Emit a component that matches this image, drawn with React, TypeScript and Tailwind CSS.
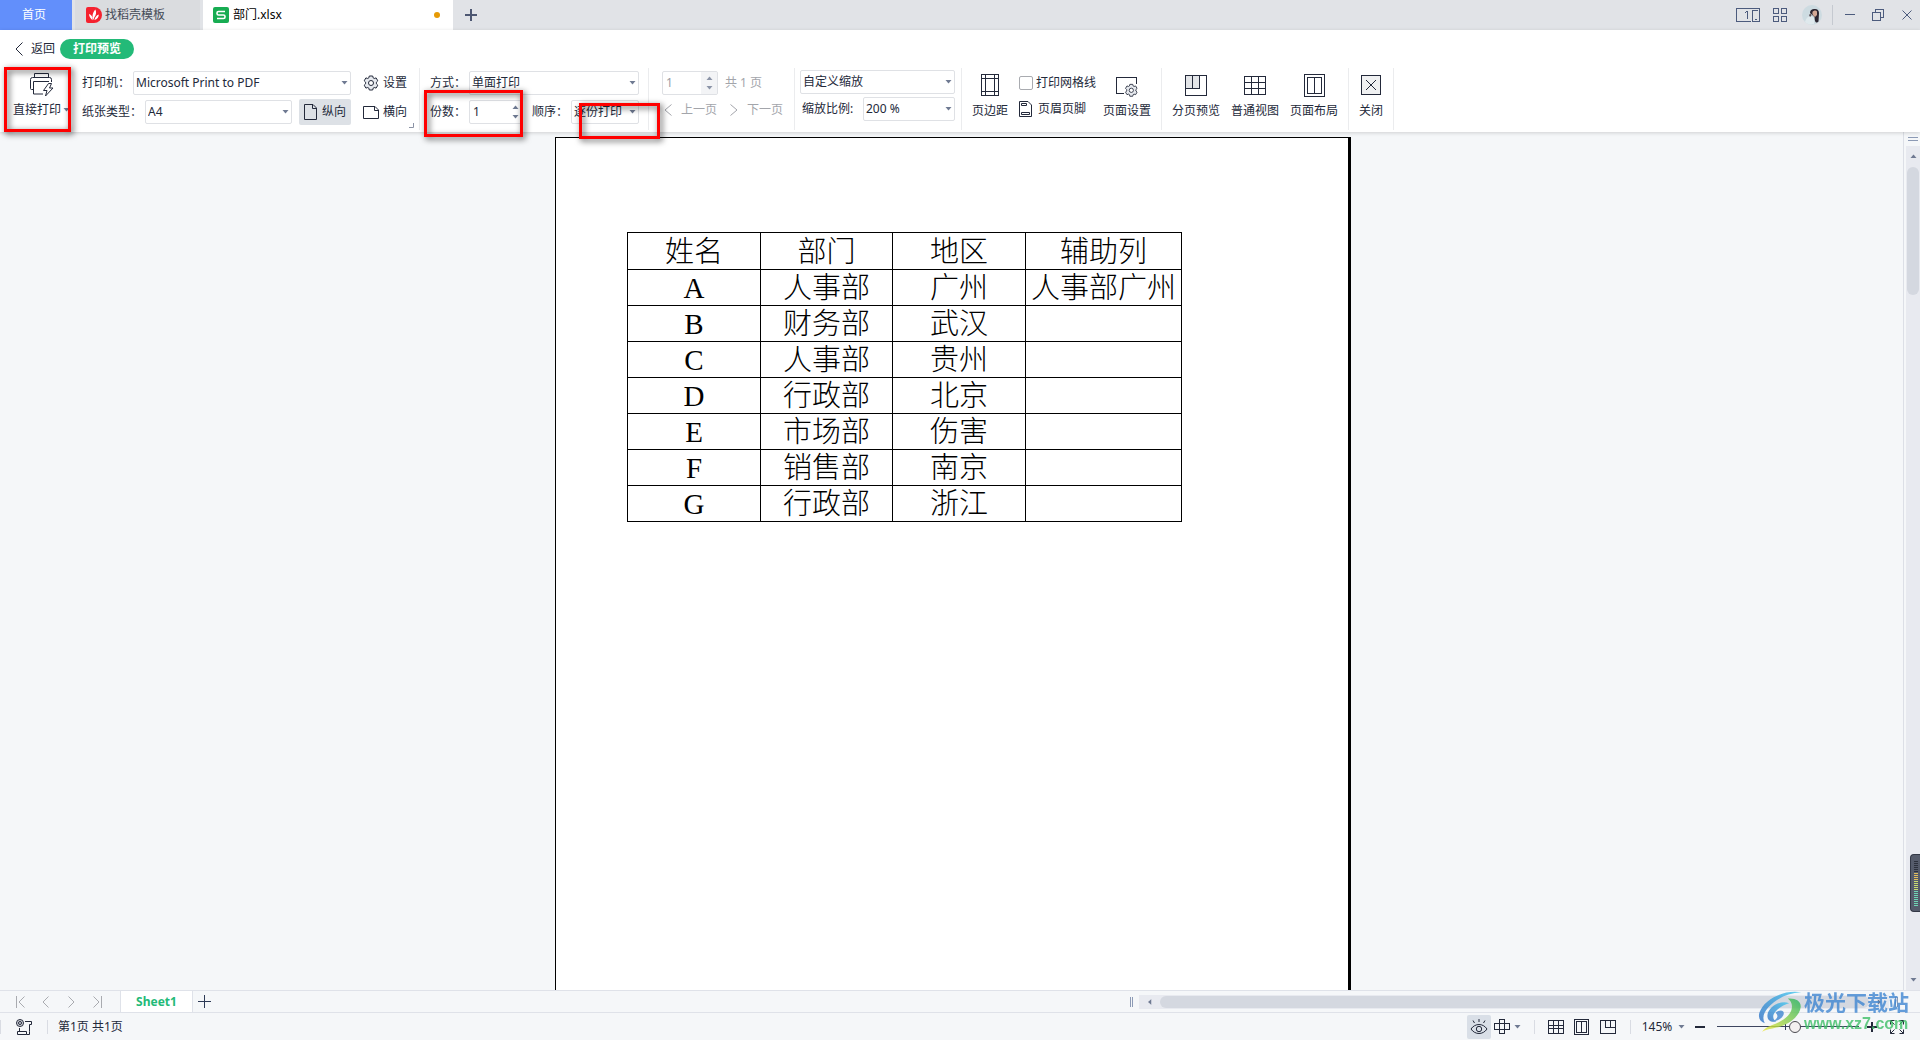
import React from 'react'
import clsx from 'clsx'

const HEADERS = ['姓名', '部门', '地区', '辅助列']

const ROWS = [
    ['A', '人事部', '广州', '人事部广州'],
    ['B', '财务部', '武汉', ''],
    ['C', '人事部', '贵州', ''],
    ['D', '行政部', '北京', ''],
    ['E', '市场部', '伤害', ''],
    ['F', '销售部', '南京', ''],
    ['G', '行政部', '浙江', ''],
]

const CELL = 'border border-black px-0 pt-[2px] pb-0 text-center font-light'

type IconProps = {
    w: number
    h: number
    className?: string
    children: React.ReactNode
}

const Icon: React.FC<IconProps> = ({ w, h, className, children }) => (
    <svg
        width={w}
        height={h}
        viewBox={`0 0 ${w} ${h}`}
        fill="none"
        stroke="currentColor"
        className={clsx('shrink-0', className)}
        aria-hidden="true"
    >
        {children}
    </svg>
)

const Caret = ({ className }: { className?: string }) => (
    <Icon w={7} h={4} className={clsx('text-[#6f7a92]', className)}>
        <path d="M0.5 0h6L3.5 3.5z" fill="currentColor" stroke="none" />
    </Icon>
)

const GearShape = () => (
    <>
        <path d="M6.3 1h3.4l.5 1.9 1 .6 1.9-.6 1.7 2.9-1.4 1.4v1.6l1.4 1.4-1.7 2.9-1.9-.6-1 .6-.5 1.9H6.3l-.5-1.9-1-.6-1.9.6-1.7-2.9 1.4-1.4V7.2L1.2 5.8l1.7-2.9 1.9.6 1-.6z" fill="#e6e9ee" />
        <circle cx="8" cy="8" r="2.5" fill="#fff" />
    </>
)

const Chevron = ({ dir, w = 8, h = 14, className }: { dir: 'left' | 'right'; w?: number; h?: number; className?: string }) => (
    <Icon w={w} h={h} className={className}>
        {dir === 'left'
            ? <path d={`M${w - 0.5} 0.5L1 ${h / 2}L${w - 0.5} ${h - 0.5}`} />
            : <path d={`M0.5 0.5L${w - 1} ${h / 2}L0.5 ${h - 0.5}`} />}
    </Icon>
)

const GridIcon = ({ w, h }: { w: number; h: number }) => (
    <Icon w={w} h={h}>
        <path
            shapeRendering="crispEdges"
            d={`M0.5 0.5h${w - 1}v${h - 1}h${1 - w}zM${Math.round(w / 3) + 0.5} 0v${h}M${Math.round((w * 2) / 3) - 0.5} 0v${h}M0 ${Math.round(h / 3) + 0.5}h${w}M0 ${Math.round((h * 2) / 3) - 0.5}h${w}`}
        />
    </Icon>
)

const BookIcon = ({ w, h, inset }: { w: number; h: number; inset: number }) => (
    <Icon w={w} h={h}>
        <path
            shapeRendering="crispEdges"
            d={`M0.5 0.5h${w - 1}v${h - 1}h${1 - w}zM${inset + 0.5} ${inset + 0.5}h${w - inset * 2 - 1}v${h - inset * 2 - 1}h${inset * 2 + 1 - w}zM${Math.floor(w / 2) + 0.5} ${inset}v${h - inset * 2}`}
        />
    </Icon>
)

type SelectProps = {
    id: string
    value: string
    className: string
    label?: string
}

const Select: React.FC<SelectProps> = ({ id, value, className, label }) => (
    <div className={clsx('grid h-6 shrink-0 items-center', className)}>
        <select
            id={id}
            aria-label={label}
            className="col-start-1 row-start-1 h-6 w-full appearance-none rounded-xs border border-[#dfe1e5] bg-white pl-0.5 text-[12px] outline-none"
        >
            <option>{value}</option>
        </select>
        <Caret className="pointer-events-none col-start-1 row-start-1 mr-[3px] justify-self-end" />
    </div>
)

type SpinnerProps = {
    id: string
    className: string
    label?: string
    disabled?: boolean
}

const Spinner: React.FC<SpinnerProps> = ({ id, className, label, disabled }) => (
    <div className={clsx('flex h-6 shrink-0 rounded-xs border border-[#dfe1e5] bg-white', disabled && 'text-[#9a9da5]', className)}>
        <input id={id} aria-label={label} defaultValue="1" disabled={disabled} className="w-full min-w-0 pl-[3px] text-[12px] outline-none" />
        <div className={clsx('flex shrink-0 flex-col items-center justify-between py-1', disabled ? 'w-4 bg-[#f1f2f4] opacity-80' : 'w-3')}>
            <Caret className="rotate-180" />
            <Caret />
        </div>
    </div>
)

const Group = ({ className, children }: { className?: string; children: React.ReactNode }) => (
    <div className={clsx('flex h-[62px] shrink-0 border-r border-[#ebecee]', className)}>{children}</div>
)

const BigButton = ({ label, className, children }: { label: string; className?: string; children: React.ReactNode }) => (
    <button className={clsx('flex h-[52px] shrink-0 flex-col items-center', className)}>
        <span className="flex h-7 items-center">{children}</span>
        <span className="leading-6">{label}</span>
    </button>
)

const Highlight = ({ className }: { className: string }) => (
    <div className={clsx('pointer-events-none absolute z-20 border-3 border-[#f00] drop-shadow-[2px_2px_3px_rgba(0,0,0,0.7)]', className)} />
)

const TitleBar = () => (
    <header className="flex h-[30px] shrink-0 bg-[#e1e3e7]">
        <button className="w-[72px] bg-[#628ffb] pr-1 text-white">首页</button>
        <button className="ml-[3px] flex w-[125px] items-center gap-[3px] bg-[#dadcdf] pl-[11px] text-[#454b57]">
            <Icon w={16} h={16}>
                <path d="M2 0h6a8 8 0 0 1 0 16H2a2 2 0 0 1-2-2V2a2 2 0 0 1 2-2z" fill="#f5222f" stroke="none" />
                <path d="M6.6 13.2C4.6 11.8 3.2 9.8 3 7c1.7.6 2.8 1.7 3.4 3.200zM7.4 13C5.8 9 6.8 5.2 9.4 2.600c1.2 2.4.9 5.4-1.2 8z" fill="#fff" stroke="none" />
                <path d="M8.4 13c.4-2.6 2-4.8 4.400-5.600-.1 2.800-1.600 4.900-4.400 5.600z" fill="#fff" stroke="none" />
            </Icon>
            <span>找稻壳模板</span>
        </button>
        <button className="ml-[3px] flex w-[250px] items-center gap-1 bg-white pr-[13px] pl-[10px] text-black">
            <Icon w={16} h={16}>
                <rect width="16" height="16" rx="2" fill="#17ac52" stroke="none" />
                <path d="M12 4.5H5.5A1.5 1.5 0 0 0 4 6v.5A1.5 1.5 0 0 0 5.5 8h5A1.5 1.5 0 0 1 12 9.5v.5a1.5 1.5 0 0 1-1.5 1.5H4" stroke="#fff" strokeWidth="1.6" />
            </Icon>
            <span>部门.xlsx</span>
            <span className="ml-auto size-1.5 rounded-full bg-[#e69a05]" />
        </button>
        <button className="flex w-9 items-center justify-center text-[#4d5772]" aria-label="新建">
            <Icon w={12} h={12}><path d="M6 0v12M0 6h12" strokeWidth="2" shapeRendering="crispEdges" /></Icon>
        </button>
        <div className="ml-auto flex items-center pr-2 text-[#4c5b7d]">
            <button aria-label="窗口排列">
                <Icon w={24} h={14}>
                    <path d="M15 13.5H0.5V0.5h23v13h-7v-11h5" shapeRendering="crispEdges" />
                    <path d="M9 5l2-1.5V11M19 11.5h2" shapeRendering="crispEdges" />
                </Icon>
            </button>
            <button className="ml-[13px]" aria-label="应用">
                <Icon w={14} h={14}>
                    <path d="M0.5 0.5h5v5h-5zM8.5 0.5h5v5h-5zM0.5 8.5h5v5h-5zM8.5 8.5h5v5h-5z" shapeRendering="crispEdges" />
                </Icon>
            </button>
            <button className="ml-[15px]" aria-label="账户">
                <Icon w={20} h={20}>
                    <circle cx="10" cy="10" r="10" fill="#cddbe1" stroke="none" />
                    <path d="M3 17c1-4 3-6 6-6l3 2v6c-4 1-7 0-9-2z" fill="#dfe9ed" stroke="none" />
                    <path d="M8 8c0-3 2-4 4-4 3-.5 5 1 5 4l-.5 8.5c-1.5 2-3.5 1-3.7-1.5L12.5 12z" fill="#2b2530" stroke="none" />
                    <path d="M10.5 7c1-1.5 3.5-2 4.5-.5v3.5l-2 2c-2-1-3-3-2.5-5z" fill="#d3a895" stroke="none" />
                    <path d="M7 10l1.500-1.500 1 2L8 12z" fill="#5a4f55" stroke="none" />
                </Icon>
            </button>
            <span className="ml-[10px] h-5 w-px bg-[#c5c9d0]" />
            <button className="ml-3" aria-label="最小化">
                <Icon w={10} h={12}><path d="M0 5.5h10" shapeRendering="crispEdges" /></Icon>
            </button>
            <button className="ml-[17px]" aria-label="还原">
                <Icon w={12} h={12}>
                    <path d="M0.5 3.5h8v8h-8zM3.5 3V0.5h8v8H9" shapeRendering="crispEdges" />
                </Icon>
            </button>
            <button className="ml-[18px]" aria-label="关闭窗口">
                <Icon w={10} h={10}><path d="M0.5 0.5l9 9M9.5 0.5l-9 9" /></Icon>
            </button>
        </div>
    </header>
)

const Toolbar = () => (
    <div className="relative z-10 shrink-0 bg-white shadow-[0_1px_4px_rgba(0,0,0,0.16)]">
        <div className="flex h-[38px] items-center pl-[15px]">
            <button className="flex items-center gap-2">
                <Chevron dir="left" />
                返回
            </button>
            <span className="ml-[5px] flex h-5 w-[74px] items-center justify-center rounded-full bg-[#23ba78] font-bold text-white">打印预览</span>
        </div>
        <div className="flex h-16">
            <div className="relative w-[82px] shrink-0 pl-[13px]">
                <button className="flex flex-col">
                    <span className="flex h-[30px] w-12 items-center justify-end pt-1 pr-[7px]">
                        <Icon w={24} h={24}>
                            <path d="M4.5 4V0.5h14V4M3 16.5H1.5a1 1 0 0 1-1-1v-9a2 2 0 0 1 2-2h17a2 2 0 0 1 2 2V9M19 8.5H3.5v12.5H13" />
                            <path d="M18.5 10.5l-5 7h3.5l-1.5 5.5 7.5-8h-3.5l2-4.5z" />
                        </Icon>
                    </span>
                    <span className="flex items-center gap-[2px] leading-6">直接打印<Caret /></span>
                </button>
                <Highlight className="-top-px left-1 h-[65px] w-[67px]" />
            </div>

            <Group className="relative w-[338px] flex-col gap-1 pt-[3px]">
                <div className="flex items-center">
                    <label htmlFor="printer" className="w-[51px]">打印机：</label>
                    <Select id="printer" value="Microsoft Print to PDF" className="w-[218px]" />
                    <button className="ml-3 flex items-center gap-1"><Icon w={16} h={16}><GearShape /></Icon>设置</button>
                </div>
                <div className="flex items-center">
                    <label htmlFor="paper" className="w-[63px]">纸张类型：</label>
                    <Select id="paper" value="A4" className="w-[147px]" />
                    <button className="ml-[7px] flex h-[26px] w-[52px] items-center gap-[5px] rounded-xs bg-[#dde1e6] pl-[5px]">
                        <Icon w={13} h={16}><path d="M0.5 0.5h8.5l3.5 3.5v11.5h-12zM8.5 0.5v4h4" /></Icon>
                        纵向
                    </button>
                    <button className="ml-3 flex items-center gap-1">
                        <Icon w={16} h={13}><path d="M0.5 0.5h11.5l3.5 3.5v8.5h-15zM11.5 0.5v4h4" /></Icon>
                        横向
                    </button>
                </div>
                <Icon w={5} h={5} className="absolute right-[5px] bottom-0.5 text-[#8b93a5]"><path d="M0 4.5h4.5V0" /></Icon>
            </Group>

            <Group className="relative w-[229px] flex-col gap-[5px] pt-[3px] pl-[10px]">
                <div className="flex items-center">
                    <label htmlFor="sides" className="w-[39px]">方式：</label>
                    <Select id="sides" value="单面打印" className="w-[170px]" />
                </div>
                <div className="flex items-center">
                    <label htmlFor="copies" className="w-[39px]">份数：</label>
                    <Spinner id="copies" className="w-[53px]" />
                    <label htmlFor="order" className="ml-[10px] w-[39px]">顺序：</label>
                    <Select id="order" value="逐份打印" className="w-[68px]" />
                </div>
                <Highlight className="top-[22px] left-1 h-[47px] w-[99px]" />
                <Highlight className="top-[35px] left-[159px] h-9 w-[81px]" />
            </Group>

            <Group className="w-[146px] flex-col gap-[2px] pt-[3px] pl-[13px] text-[#a3a5ab]">
                <div className="flex items-center gap-[7px]">
                    <Spinner id="page" label="页码" disabled className="w-[56px]" />
                    共 1 页
                </div>
                <div className="flex h-[26px] items-center gap-[13px] pl-[2px]">
                    <button disabled className="flex items-center gap-[9px]"><Chevron dir="left" h={12} />上一页</button>
                    <button disabled className="flex items-center gap-[9px]"><Chevron dir="right" h={12} />下一页</button>
                </div>
            </Group>

            <Group className="w-[167px] flex-col gap-[3px] pt-[2px] pl-[5px]">
                <Select id="scaling" label="缩放" value="自定义缩放" className="w-[155px]" />
                <div className="flex items-center">
                    <label htmlFor="ratio" className="w-[63px] pl-[2px]">缩放比例:</label>
                    <Select id="ratio" value="200 %" className="w-[92px]" />
                </div>
            </Group>

            <Group className="w-[200px] pt-[3px] pl-[10px]">
                <BigButton label="页边距" className="w-9">
                    <Icon w={18} h={22}><path d="M0.5 0.5h17v21h-17zM4.5 0v22M13.5 0v22M0 4.5h18M0 17.5h18" shapeRendering="crispEdges" /></Icon>
                </BigButton>
                <div className="ml-[11px] flex flex-col">
                    <label className="flex h-6 items-center gap-[3px]">
                        <input type="checkbox" className="size-[14px] appearance-none rounded-xs border border-[#a9abb0] bg-white" />
                        打印网格线
                    </label>
                    <button className="flex h-7 items-center gap-1.5">
                        <Icon w={13} h={16}>
                            <path d="M0.5 0.5h8.5l3.5 3.5v11.5h-12zM2.5 2.5h5v2h-5zM2.5 11.5h8v2h-8z" />
                        </Icon>
                        页眉页脚
                    </button>
                </div>
                <BigButton label="页面设置" className="ml-[7px] w-12">
                    <Icon w={24} h={22} className="mt-1">
                        <path d="M9 17.5H1.5V1.5h20V8" shapeRendering="crispEdges" />
                        <g transform="translate(9.5 7.5) scale(0.85)"><GearShape /></g>
                    </Icon>
                </BigButton>
            </Group>

            <Group className="w-[187px] gap-[11px] pt-[3px] pl-[10px]">
                <BigButton label="分页预览" className="w-12">
                    <Icon w={22} h={21}>
                        <path d="M1 1h14v12H1z" fill="#e3e5e8" stroke="none" />
                        <path d="M0.5 0.5h21v20h-21zM0 13.5h14.5V0M7.5 0v13" shapeRendering="crispEdges" />
                    </Icon>
                </BigButton>
                <BigButton label="普通视图" className="w-12"><GridIcon w={22} h={19} /></BigButton>
                <BigButton label="页面布局" className="w-12"><BookIcon w={21} h={23} inset={3} /></BigButton>
            </Group>

            <Group className="w-[45px] pt-[3px] pl-[10px]">
                <BigButton label="关闭" className="w-6">
                    <Icon w={20} h={20}>
                        <path d="M0.5 0.5h19v19h-19z" fill="#f0f1f2" shapeRendering="crispEdges" />
                        <path d="M5 5l10 10M15 5L5 15" />
                    </Icon>
                </BigButton>
            </Group>
        </div>
    </div>
)

const Preview = () => (
    <main className="flex min-h-0 flex-1">
        <div className="flex flex-1 justify-center overflow-hidden pt-[5px] pl-[3px]">
            <div className="w-[796px] border-t border-r-3 border-l border-black bg-white pt-[94px] pl-[71px]">
                <table className="w-[554px] table-fixed border-collapse font-['Liberation_Serif','Noto_Sans_CJK_SC',serif] text-[29px] leading-[33px] text-black">
                    <colgroup>
                        <col className="w-[133px]" />
                        <col className="w-[132px]" />
                        <col className="w-[133px]" />
                        <col className="w-[156px]" />
                    </colgroup>
                    <thead>
                        <tr className="h-[37px]">
                            {HEADERS.map((h) => <th key={h} className={CELL}>{h}</th>)}
                        </tr>
                    </thead>
                    <tbody>
                        {ROWS.map((row) => (
                            <tr key={row[0]} className="h-9">
                                {row.map((cell, i) => <td key={i} className={CELL}>{cell}</td>)}
                            </tr>
                        ))}
                    </tbody>
                </table>
            </div>
        </div>
        <div className="relative flex w-[17px] shrink-0 flex-col border-l border-[#dcdfe6] pl-0.5">
            <div className="flex h-[14px] items-center justify-center text-[#8c9ab5]">
                <Icon w={10} h={4}><path d="M0 0.5h10M0 3.5h10" shapeRendering="crispEdges" /></Icon>
            </div>
            <div className="flex flex-1 flex-col items-center bg-[#e8eaf0]">
                <div className="flex h-[21px] items-center pb-0.5"><Caret className="rotate-180" /></div>
                <div className="h-32 w-3 rounded-full bg-[#d4d8e0]" />
                <div className="mt-auto flex h-5 items-center"><Caret /></div>
            </div>
            {/* floating level meter */}
            <div className="absolute right-0 bottom-[78px] flex h-[58px] w-[10px] flex-col items-center gap-px rounded-l-sm border border-r-0 border-[#333846] bg-[#555b6b] pt-1.5">
                {Array.from({ length: 23 }, (_, i) => (
                    <span
                        key={i}
                        className={clsx('h-px w-1 shrink-0', i < 6 ? 'bg-[#2c303c]' : i < 10 ? 'bg-[#e2bf5c]' : i < 15 ? 'bg-[#c9dc72]' : 'bg-[#6fd6b4]')}
                    />
                ))}
            </div>
        </div>
    </main>
)

const SheetBar = () => (
    <div className="flex h-[23px] shrink-0 border-y border-[#dfe2e9]">
        <div className="flex w-[120px] items-center pl-4 text-[#a9abb0]">
            <button aria-label="首个工作表"><Icon w={9} h={12}><path d="M0.5 0v12M8.5 0.5L3 6l5.5 5.5" /></Icon></button>
            <button className="ml-[17px]" aria-label="上一个工作表"><Chevron dir="left" w={7} h={12} /></button>
            <button className="ml-[19px]" aria-label="下一个工作表"><Chevron dir="right" w={7} h={12} /></button>
            <button className="ml-[18px]" aria-label="末个工作表"><Icon w={9} h={12}><path d="M8.5 0v12M0.5 0.5L6 6L0.5 11.5" /></Icon></button>
        </div>
        <button className="w-[73px] border-x border-[#dfe2e9] bg-white font-bold text-[#23ba78]">Sheet1</button>
        <button className="pl-[5px] text-[#2d3a56]" aria-label="新建工作表">
            <Icon w={13} h={13}><path d="M6.5 0v13M0 6.5h13" shapeRendering="crispEdges" /></Icon>
        </button>
        <div className="ml-auto flex w-[790px] items-center text-[#8c9ab5]">
            <Icon w={3} h={10}><path d="M0.5 0v10M2.5 0v10" shapeRendering="crispEdges" /></Icon>
            <div className="ml-1.5 flex h-[14px] flex-1 items-center bg-[#e8eaf0]">
                <span className="flex w-[21px] justify-center"><Caret className="rotate-90" /></span>
                <div className="h-3 flex-1 rounded-full bg-[#d4d8e0]" />
                <span className="flex w-5 justify-center"><Caret className="-rotate-90" /></span>
            </div>
            <Icon w={3} h={10} className="mr-[22px] ml-1.5"><path d="M0.5 0v10M2.5 0v10" shapeRendering="crispEdges" /></Icon>
        </div>
    </div>
)

const StatusBar = () => (
    <footer className="flex h-[27px] shrink-0 items-center">
        <span className="h-[14px] w-px bg-[#d9dce3]" />
        <button className="ml-[15px]" aria-label="宏">
            <Icon w={16} h={16}>
                <circle cx="4" cy="4" r="3.5" fill="#d5d8de" />
                <circle cx="4" cy="4" r="1.5" />
                <path d="M9 2.5h6.5v3h-2v7M3.5 9v3.5M1.5 12.5h9v3h-9zM10.5 15.5h3v-3" />
            </Icon>
        </button>
        <span className="ml-[15px] h-[14px] w-px bg-[#d9dce3]" />
        <span className="ml-[10px]">第1页 共1页</span>
        <div className="ml-auto flex items-center pr-4">
            <button className="flex h-6 w-6 items-center justify-center rounded-xs bg-[#d9dfe7]" aria-label="护眼模式">
                <Icon w={18} h={16}>
                    <path d="M1 10c4-6 12-6 16 0-4 6-12 6-16 0z" />
                    <circle cx="9" cy="10" r="2.7" />
                    <path d="M9 0v3M3 1.5l1.5 2.5M15 1.5L13.5 4" />
                </Icon>
            </button>
            <button className="ml-[3px] flex items-center gap-1" aria-label="阅读模式">
                <Icon w={16} h={15}>
                    <path d="M5.5 10.5h-5v-6h5v-4h5v4h5v6h-5v4h-5zM5.5 4.5h5v6h-5z" shapeRendering="crispEdges" />
                </Icon>
                <Caret />
            </button>
            <span className="mx-[13px] h-[14px] w-px bg-[#d9dce3]" />
            <button aria-label="普通视图"><GridIcon w={16} h={14} /></button>
            <button className="ml-[10px]" aria-label="页面布局"><BookIcon w={15} h={16} inset={2} /></button>
            <button className="ml-[11px]" aria-label="分页预览">
                <Icon w={16} h={14}><path d="M0.5 0.5h15v13h-15zM5.5 0v7.5h10M10.5 0v7" shapeRendering="crispEdges" /></Icon>
            </button>
            <span className="ml-[14px] h-[14px] w-px bg-[#d9dce3]" />
            <button className="ml-[10px] flex items-center gap-[5px]"><span className="w-8">145%</span><Caret /></button>
            <button className="ml-2.5" aria-label="缩小">
                <Icon w={10} h={10}><path d="M0 5h10" strokeWidth="2" /></Icon>
            </button>
            <div className="relative ml-3 flex items-center">
                <input
                    type="range"
                    aria-label="显示比例"
                    min={0}
                    max={100}
                    defaultValue={55}
                    className="h-3 w-[142px] appearance-none bg-[linear-gradient(#3d4660,#3d4660)] bg-[length:100%_1px] bg-center bg-no-repeat [&::-webkit-slider-thumb]:size-3 [&::-webkit-slider-thumb]:appearance-none [&::-webkit-slider-thumb]:rounded-full [&::-webkit-slider-thumb]:border [&::-webkit-slider-thumb]:border-[#4a4a50] [&::-webkit-slider-thumb]:bg-[#f3f0f0]"
                />
                <span className="absolute left-[68px] h-1.5 w-px bg-[#2d3a56]" />
            </div>
            <button className="ml-2" aria-label="放大">
                <Icon w={10} h={10}><path d="M0 5h10M5 0v10" strokeWidth="2" /></Icon>
            </button>
            <button className="ml-[13px]" aria-label="全屏">
                <Icon w={14} h={14}>
                    <path d="M4.5 0.5h-4v4M9.5 0.5h4v4M0.5 9.5v4h4M13.5 9.5v4h-4M0.5 0.5l4 4M13.5 0.5l-4 4M0.5 13.5l4-4M13.5 13.5l-4-4" />
                </Icon>
            </button>
        </div>
    </footer>
)

const Watermark = () => (
    <div className="pointer-events-none absolute right-[11px] bottom-1.5 z-30 flex items-center gap-0.5 opacity-80">
        <svg width="44" height="42" viewBox="30 28 130 124" fill="none" aria-hidden="true">
            <defs>
                <linearGradient id="sky" x1="0" y1="1" x2="1" y2="0">
                    <stop offset="0" stopColor="#2f6fc4" />
                    <stop offset="1" stopColor="#45c8f0" />
                </linearGradient>
                <linearGradient id="leaf" x1="0" y1="1" x2="1" y2="0">
                    <stop offset="0" stopColor="#f0e83a" />
                    <stop offset="1" stopColor="#22b35e" />
                </linearGradient>
            </defs>
            <path d="M158 32C110 24 50 48 34 92c-4 16 2 27 16 31-8-14-4-30 10-46 22-25 55-42 98-45z" fill="url(#sky)" />
            <path d="M118 50c24-2 40 8 38 26-4 30-40 54-72 60-16 4-30 6-42 12 14-16 30-18 46-26 24-12 40-26 42-44 2-12-4-22-12-28z" fill="url(#leaf)" />
            <path d="M122 64c-26-10-60 10-64 34-2 16 10 24 26 20-10-6-12-16-4-27 10-14 26-22 42-27z" fill="url(#sky)" />
            <path d="M82 92c12-10 26-8 24 4-2 12-20 22-34 22 12-6 22-14 10-26z" fill="#3f86d0" />
        </svg>
        <div className="flex flex-col">
            <span className="text-[21px] leading-6 font-bold text-[#3f86d2]">极光下载站</span>
            <span className="font-['Liberation_Sans',sans-serif] text-[16px] leading-5 font-bold text-[#3fbf68]">www.xz7.com</span>
        </div>
    </div>
)

export default function App() {
    return (
        <div className="relative flex h-screen w-full flex-col overflow-hidden bg-[#f5f7f9] font-['Noto_Sans','Noto_Sans_CJK_SC',sans-serif] text-[12px] leading-4 text-[#23293a]">
            <TitleBar />
            <Toolbar />
            <Preview />
            <SheetBar />
            <StatusBar />
            <Watermark />
        </div>
    )
}
